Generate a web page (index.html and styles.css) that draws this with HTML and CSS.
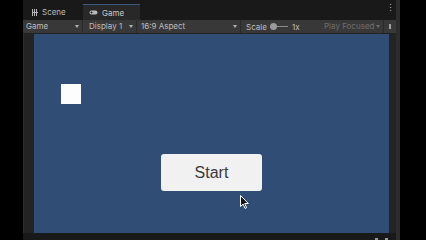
FILE: index.html
```html
<!DOCTYPE html>
<html lang="en">

<head>
    <meta charset="UTF-8">
    <meta name="viewport" content="width=device-width, initial-scale=1.0">
    <title>Game View</title>
    <link rel="stylesheet" href="styles.css">
</head>

<body>

    <div id="editor-panel">
        <div class="tab-bar">
            <div class="tab scene">
                <svg class="tab-icon" width="6" height="7" viewBox="0 0 6 7">
                    <path d="M0.5 0v7M2.5 0v7M4.5 0v7M0 3.5h6" stroke="#b8b8b8" stroke-width="1" fill="none"/>
                </svg>
                <span>Scene</span>
            </div>
            <div class="tab active">
                <svg class="tab-icon" width="9" height="5" viewBox="0 0 9 5">
                    <rect x="0.5" y="0.5" width="8" height="4" rx="2" fill="#b8b8b8"/>
                    <rect x="2" y="1.5" width="1" height="2" fill="#2a2a2a"/>
                    <rect x="1.5" y="2" width="2" height="1" fill="#2a2a2a"/>
                </svg>
                <span>Game</span>
            </div>
            <div class="tab-spacer"></div>
            <div class="kebab">⋮</div>
        </div>

        <div class="toolbar">
            <div class="dropdown game-mode">Game<span class="arrow"></span></div>
            <div class="dropdown display">Display 1<span class="arrow"></span></div>
            <div class="dropdown aspect">16:9 Aspect<span class="arrow"></span></div>
            <div class="scale">
                <span>Scale</span>
                <span class="slider"><span class="knob"></span></span>
                <span>1x</span>
            </div>
            <div class="dropdown play disabled">Play Focused<span class="arrow"></span></div>
            <div class="tool-end"></div>
        </div>

        <div class="view-row">
            <div class="gutter-left"></div>
            <div id="game-view">
                <div class="square"></div>
                <button class="start-btn">Start</button>
                <svg class="cursor" width="10" height="15" viewBox="0 0 10 15">
                    <path d="M0.5 0.5v11l2.6-2.4 1.9 4.3 1.6-0.7-1.9-4.2h3.6z" fill="#111" stroke="#fff" stroke-width="1"/>
                </svg>
            </div>
            <div class="gutter-right"></div>
        </div>

        <div class="status-bar">
            <span class="status-icon"></span>
            <span class="status-icon"></span>
        </div>
    </div>

</body>

</html>
```

FILE: styles.css
```css
body {
    margin: 0;
    width: 426px;
    height: 240px;
    background-color: #000;
    font-family: Inter, "Noto Sans", sans-serif;
    overflow: hidden;
}

#editor-panel {
    margin-left: 23px;
    width: 373px;
    height: 240px;
    display: flex;
    flex-direction: column;
    background-color: #191919;
    border-right: 4px solid #2c2c2c;
}

.tab-bar {
    height: 20px;
    display: flex;
    align-items: flex-end;
    background-color: #191919;
}

.tab {
    height: 16px;
    display: flex;
    align-items: center;
    gap: 4px;
    font-size: 8px;
    color: #bdbdbd;
    box-sizing: border-box;
}

.tab.scene {
    width: 60px;
    padding-left: 9px;
}

.tab.active {
    background-color: #282828;
    border-top: 1px solid #3d5a7a;
    color: #c8c8c8;
    width: 57px;
    padding-left: 6px;
}

.tab-spacer {
    flex: 1;
}

.kebab {
    align-self: center;
    color: #b8b8b8;
    font-size: 9px;
    width: 12px;
    margin-top: -6px;
    text-align: center;
}

.toolbar {
    height: 13px;
    display: flex;
    align-items: center;
    background-color: #383838;
    border-bottom: 1px solid #222;
    font-size: 8px;
    color: #bebebe;
}

.dropdown {
    position: relative;
    height: 13px;
    line-height: 13px;
    padding-left: 3px;
    box-sizing: border-box;
    border-right: 1px solid #2a2a2a;
}

.arrow {
    position: absolute;
    right: 3px;
    top: 5px;
    border-left: 2.5px solid transparent;
    border-right: 2.5px solid transparent;
    border-top: 3px solid #b0b0b0;
}

.game-mode {
    width: 60px;
}

.display {
    width: 54px;
    padding-left: 6px;
}

.aspect {
    width: 104px;
    padding-left: 4px;
}

.scale {
    display: flex;
    align-items: center;
    gap: 4px;
    width: 76px;
    padding-left: 5px;
    box-sizing: border-box;
}

.slider {
    position: relative;
    width: 17px;
    height: 1px;
    background-color: #8a8a8a;
}

.knob {
    position: absolute;
    left: -1px;
    top: -3px;
    width: 7px;
    height: 7px;
    border-radius: 50%;
    background-color: #9a9a9a;
}

.play {
    width: 66px;
    padding-left: 7px;
    border-right: none;
}

.disabled {
    color: #6e6e6e;
}

.disabled .arrow {
    border-top-color: #6e6e6e;
}

.tool-end {
    flex: 1;
    height: 13px;
    border-left: 1px solid #2a2a2a;
    background: linear-gradient(#a0a0a0, #a0a0a0) center / 2px 5px no-repeat;
}

.view-row {
    height: 199px;
    display: flex;
}

.gutter-left {
    width: 11px;
    background-color: #232323;
    border-left: 1px solid #2e2e2e;
    box-sizing: border-box;
}

.gutter-right {
    flex: 1;
    background-color: #232323;
}

#game-view {
    position: relative;
    width: 355px;
    background-color: #304e75;
}

.square {
    position: absolute;
    left: 27px;
    top: 50px;
    width: 20px;
    height: 20px;
    background-color: #fdfdfd;
}

.start-btn {
    position: absolute;
    left: 127px;
    top: 120px;
    width: 101px;
    height: 37px;
    border: none;
    border-radius: 3px;
    background-color: #f1f1f1;
    color: #3a3a3a;
    font-family: "Liberation Sans", Arial, sans-serif;
    font-size: 16px;
    padding: 0;
}

.cursor {
    position: absolute;
    left: 206px;
    top: 161px;
}

.status-bar {
    flex: 1;
    display: flex;
    justify-content: flex-end;
    align-items: flex-end;
    gap: 7px;
    padding-right: 8px;
    background-color: #191919;
}

.status-icon {
    width: 3px;
    height: 2px;
    background-color: #9a9a9a;
}
```
